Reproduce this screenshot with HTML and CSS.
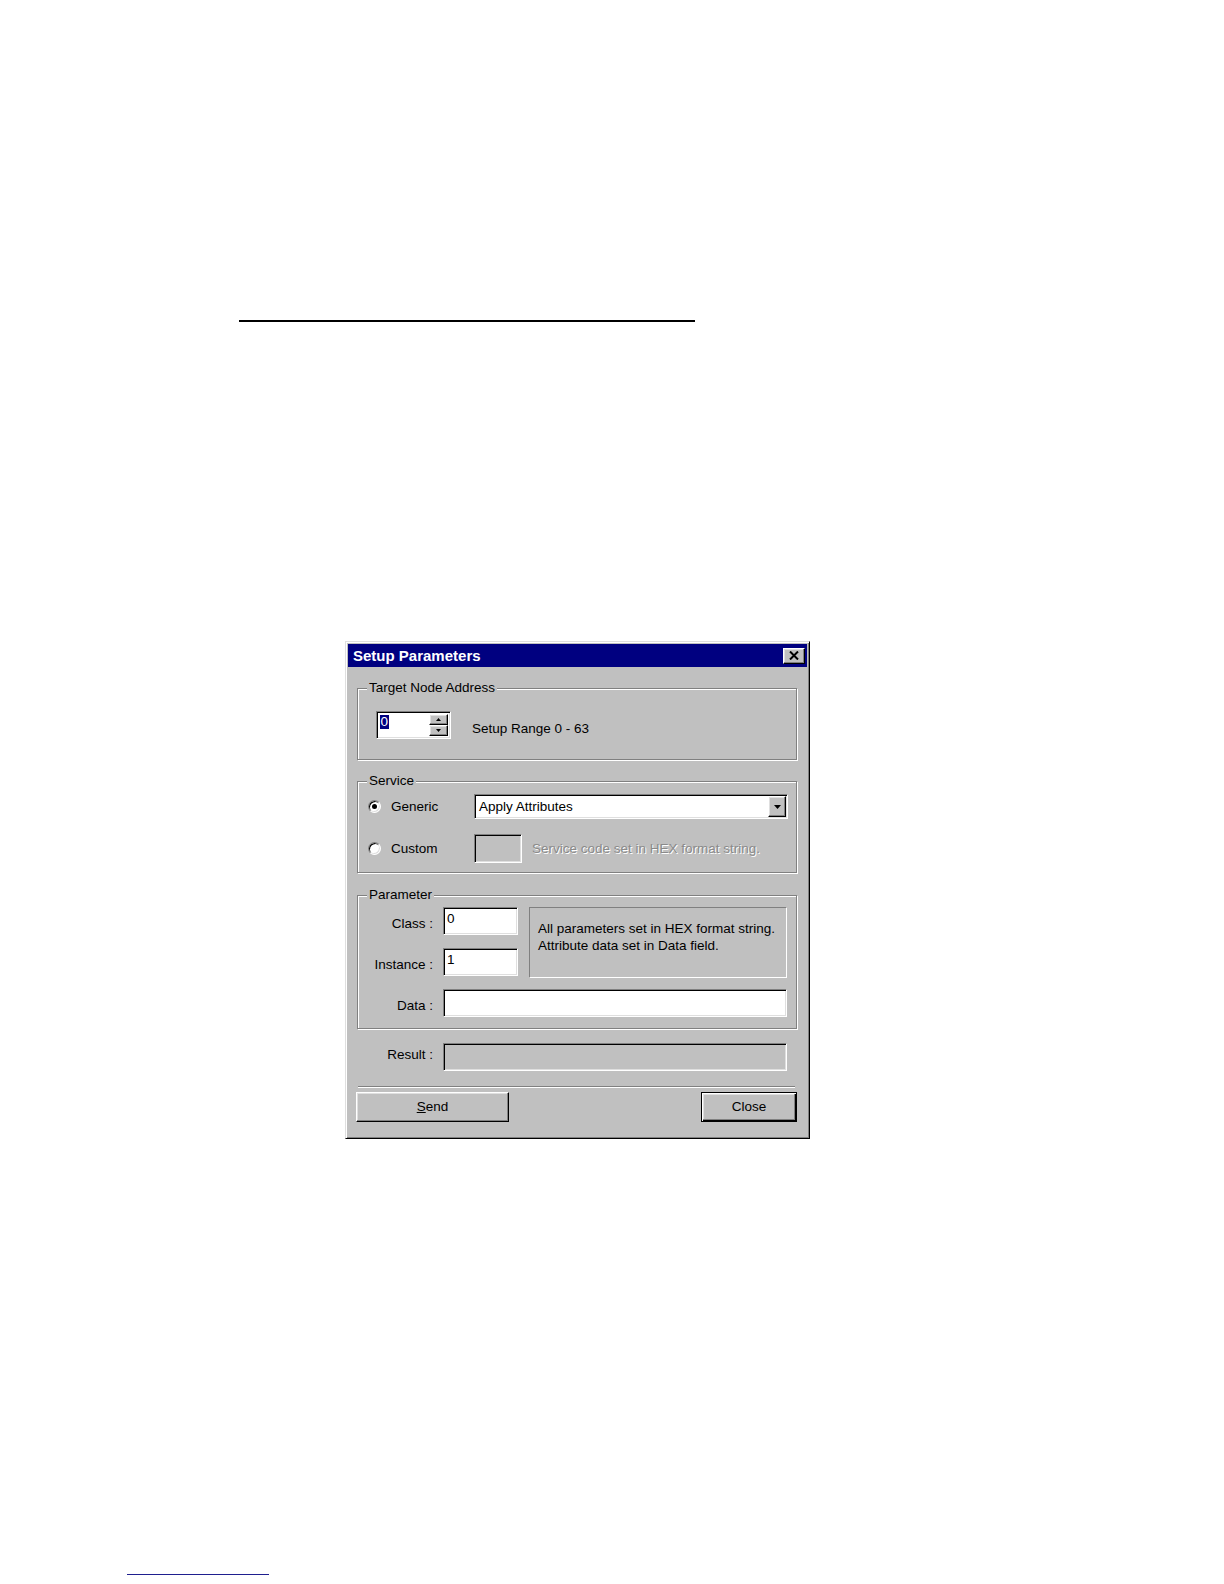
FILE: index.html
```html
<!DOCTYPE html>
<html>
<head>
<meta charset="utf-8">
<title>Setup Parameters</title>
<link rel="stylesheet" href="styles.css">
</head>
<body>
<div class="page">
  <div class="rule"></div>

  <div class="dialog">
    <div class="titlebar">
      <span class="title">Setup Parameters</span>
      <span class="tb-close raised">
        <svg width="10" height="9" viewBox="0 0 10 9"><path d="M1 0.5 L9 8.5 M9 0.5 L1 8.5" stroke="#000" stroke-width="2" fill="none"/></svg>
      </span>
    </div>

    <div class="group g1">
      <div class="legend">Target Node Address</div>
      <div class="spin-row">
        <div class="spin sunken">
          <div class="spin-field"><span class="sel">0</span></div>
          <div class="spin-btns">
            <div class="spin-btn raised"><svg width="5" height="3" viewBox="0 0 5 3"><path d="M2.5 0 L5 3 H0 Z" fill="#000"/></svg></div>
            <div class="spin-btn raised"><svg width="5" height="3" viewBox="0 0 5 3"><path d="M0 0 H5 L2.5 3 Z" fill="#000"/></svg></div>
          </div>
        </div>
        <span class="range">Setup Range 0 - 63</span>
      </div>
    </div>

    <div class="group g2">
      <div class="legend">Service</div>
      <div class="svc-row r1">
        <div class="opt"><span class="radio"><span class="dot"></span></span><span>Generic</span></div>
        <div class="combo sunken">
          <span class="combo-text">Apply Attributes</span>
          <span class="combo-btn raised"><svg width="7" height="4" viewBox="0 0 7 4"><path d="M0 0 H7 L3.5 4 Z" fill="#000"/></svg></span>
        </div>
      </div>
      <div class="svc-row r2">
        <div class="opt"><span class="radio"></span><span>Custom</span></div>
        <div class="custom-edit sunken"></div>
        <span class="hint">Service code set in HEX format string.</span>
      </div>
    </div>

    <div class="group g3">
      <div class="legend">Parameter</div>
      <div class="param-grid">
        <span class="lbl l1">Class :</span>
        <div class="edit sunken e1">0</div>
        <div class="info">All parameters set in HEX format string.<br>Attribute data set in Data field.</div>
        <span class="lbl l2">Instance :</span>
        <div class="edit sunken e2">1</div>
        <span class="lbl l3">Data :</span>
        <div class="edit sunken e3"></div>
      </div>
    </div>

    <div class="result-row">
      <span class="rlbl">Result :</span>
      <div class="edit sunken readonly"></div>
    </div>

    <div class="separator"></div>

    <div class="buttons">
      <div class="btn raised send"><span><u>S</u>end</span></div>
      <div class="btn default close">Close</div>
    </div>
  </div>

  <div class="footer-rule"></div>
</div>
</body>
</html>
```

FILE: styles.css
```css
* { box-sizing: border-box; }
html, body { margin: 0; padding: 0; background: #fff; }
body {
  font-family: "Liberation Sans", Arial, sans-serif;
  font-size: 13.5px;
  color: #000;
}
.page { padding-top: 320px; }
.rule { margin-left: 239px; width: 456px; height: 2px; background: #000; }

.dialog {
  margin: 319px 0 0 345px;
  width: 465px;
  background: #c0c0c0;
  border: 1px solid;
  border-color: #dfdfdf #000 #000 #dfdfdf;
  box-shadow: inset 1px 1px #fff, inset -1px -1px #808080;
  padding: 2px;
}

.raised {
  background: #c0c0c0;
  border: 1px solid;
  border-color: #fff #000 #000 #fff;
  box-shadow: inset -1px -1px #808080, inset 1px 1px #dfdfdf;
}
.sunken {
  border: 1px solid;
  border-color: #808080 #fff #fff #808080;
  box-shadow: inset 1px 1px #000, inset -1px -1px #dfdfdf;
}

.titlebar {
  height: 23px;
  background: #000080;
  display: flex;
  align-items: center;
  justify-content: space-between;
  padding: 0 2px 0 5px;
}
.title { color: #fff; font-weight: bold; font-size: 15px; line-height: 22px; }
.tb-close {
  width: 22px; height: 16px;
  display: flex; align-items: center; justify-content: center;
}

.group {
  width: 440px;
  margin: 21px 0 0 9px;
  border: 1px solid #808080;
  box-shadow: inset 1px 1px #fff, 1px 1px #fff;
}
.legend {
  display: table;
  margin: -9px 0 0 9px;
  padding: 0 2px;
  line-height: 16px;
  background: #c0c0c0;
}

/* group 1 */
.g1 { padding-bottom: 20px; }
.spin-row { display: flex; align-items: center; margin: 15px 0 0 18px; }
.spin { width: 75px; height: 28px; background: #fff; display: flex; padding: 2px; }
.spin-field { flex: 1; }
.sel {
  display: inline-block;
  margin: 1px 0 0 1px;
  line-height: 14px;
  padding: 0 0.5px;
  background: #000080;
  color: #fff;
}
.spin-btns { width: 19px; display: flex; flex-direction: column; }
.spin-btn { flex: 1; display: flex; align-items: center; justify-content: center; }
.range { margin: 8px 0 0 21px; line-height: 16px; }

/* group 2 */
.g2 { padding-bottom: 9px; }
.svc-row { display: flex; align-items: center; }
.r1 { margin-top: 5px; }
.r2 { margin-top: 15px; }
.opt { width: 116px; padding-left: 10px; display: flex; align-items: center; gap: 10px; line-height: 16px; }
.radio {
  flex: none;
  width: 13px; height: 13px;
  border-radius: 50%;
  background: #fff;
  border: 1px solid;
  border-color: #808080 #fff #fff #808080;
  box-shadow: inset 1px 1px #000, inset -1px -1px #dfdfdf;
  display: flex; align-items: center; justify-content: center;
}
.dot { width: 5px; height: 5px; border-radius: 50%; background: #000; }
.combo {
  width: 314px; height: 25px;
  background: #fff;
  display: flex; align-items: center; justify-content: space-between;
  padding: 1px 1px 1px 4px;
}
.combo-text { line-height: 16px; }
.combo-btn { width: 18px; height: 21px; display: flex; align-items: center; justify-content: center; }
.custom-edit { width: 48px; height: 29px; background: #c0c0c0; }
.hint { margin-left: 10px; color: #8a8a8a; text-shadow: 1px 1px #fff; line-height: 16px; }

/* group 3 */
.g3 { margin-top: 22px; padding-bottom: 11px; }
.param-grid {
  display: grid;
  grid-template-columns: 85px 75px 11px 258px;
  grid-template-rows: 28px 28px 28px;
  row-gap: 13px;
  margin-top: 4px;
}
.lbl {
  text-align: right;
  padding-right: 10px;
  align-self: center;
  margin-top: 5px;
  line-height: 16px;
}
.l1 { grid-column: 1; grid-row: 1; }
.l2 { grid-column: 1; grid-row: 2; }
.l3 { grid-column: 1; grid-row: 3; }
.e1 { grid-column: 2; grid-row: 1; }
.e2 { grid-column: 2; grid-row: 2; }
.e3 { grid-column: 2 / 5; grid-row: 3; }
.edit {
  height: 28px;
  background: #fff;
  padding: 3px 0 0 3px;
  line-height: 16px;
}
.info {
  grid-column: 4;
  grid-row: 1 / 3;
  height: 71px;
  border: 1px solid;
  border-color: #808080 #fff #fff #808080;
  padding: 12px 0 0 8px;
  line-height: 17px;
}

/* result */
.result-row { display: flex; margin: 14px 0 0 10px; }
.rlbl {
  width: 85px;
  text-align: right;
  padding-right: 10px;
  align-self: center;
  margin-bottom: 5px;
  line-height: 16px;
}
.readonly { width: 344px; background: #c0c0c0; }

.separator {
  margin: 15px 12px 0 10px;
  border-top: 1px solid #808080;
  border-bottom: 1px solid #fff;
}

.buttons {
  display: flex;
  justify-content: space-between;
  margin: 4px 10px 14px 8px;
}
.btn {
  height: 30px;
  display: flex; align-items: center; justify-content: center;
  line-height: 16px;
}
.send { width: 153px; }
.close {
  width: 96px;
  background: #c0c0c0;
}
.default {
  border: 1px solid #000;
  box-shadow: inset 1px 1px #fff, inset -1px -1px #000, inset -2px -2px #808080, inset 2px 2px #dfdfdf;
}

.footer-rule { margin: 435px 0 0 127px; width: 142px; height: 1px; background: #1f1f8f; }
```
